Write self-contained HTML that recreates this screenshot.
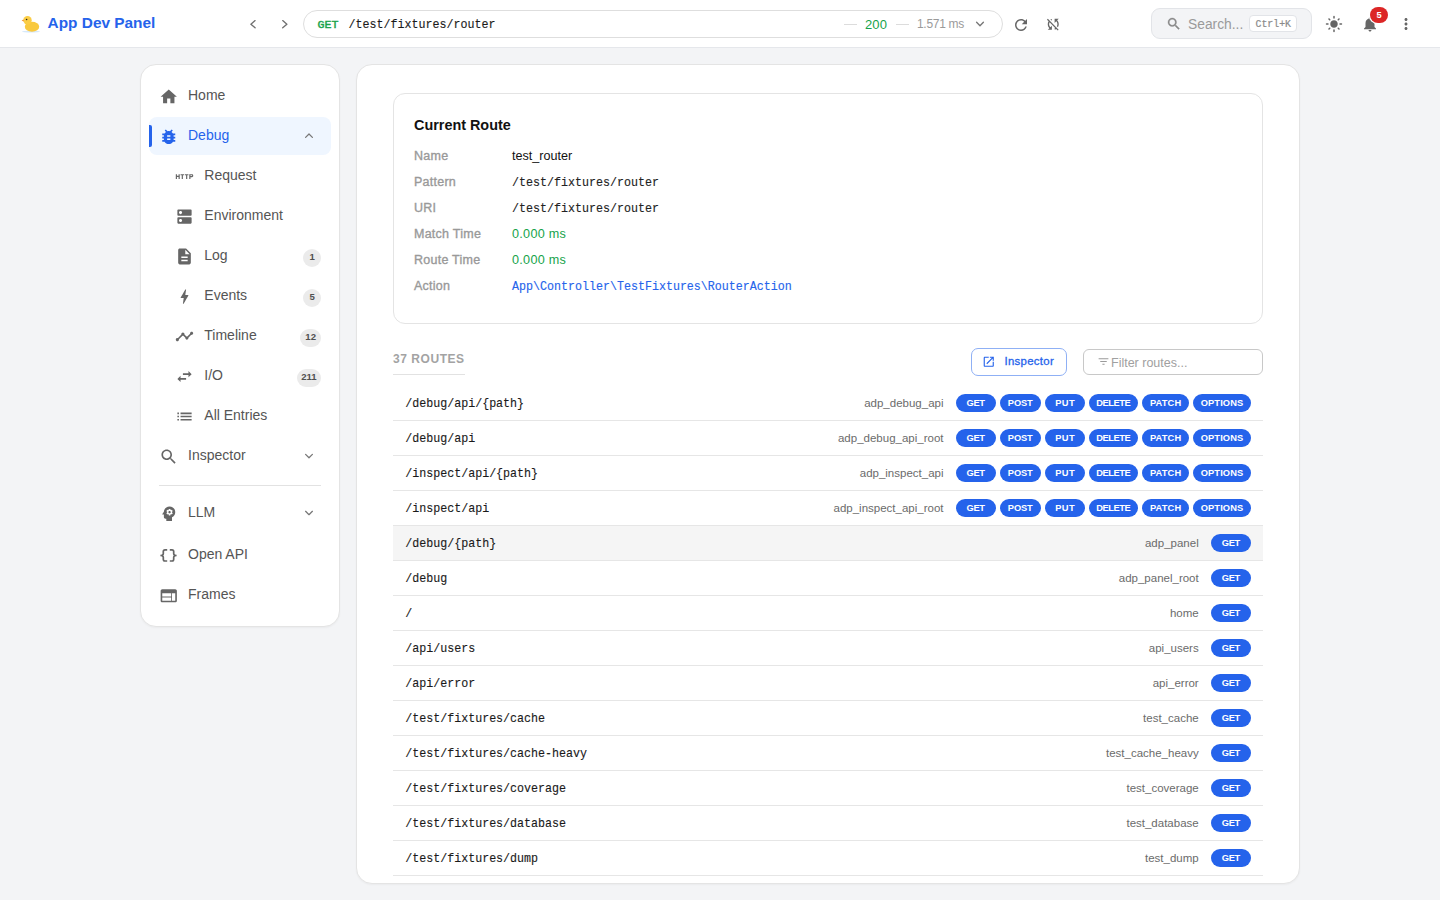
<!DOCTYPE html>
<html><head><meta charset="utf-8">
<style>
*{box-sizing:border-box;margin:0;padding:0}
html,body{width:1440px;height:900px;overflow:hidden}
body{background:#f3f4f6;font-family:"Liberation Sans",sans-serif;color:#1f2937;position:relative}
.a{position:absolute;white-space:nowrap}
.mono{font-family:"Liberation Mono",monospace}
svg.i{position:absolute;fill:#666}
#hdr{position:absolute;left:0;top:0;width:1440px;height:48px;background:#fff;border-bottom:1px solid #e5e7eb}
#side{position:absolute;left:140px;top:64px;width:200px;height:563px;background:#fff;border:1px solid #e4e4e4;border-radius:16px;box-shadow:0 1px 2px rgba(0,0,0,.04)}
#main{position:absolute;left:356px;top:64px;width:944px;height:820px;background:#fff;border:1px solid #e4e4e4;border-radius:16px;box-shadow:0 1px 2px rgba(0,0,0,.04)}
.bdg{position:absolute;height:18px;border-radius:9px;background:#ebebeb;color:#505050;font-size:9.6px;font-weight:bold;text-align:center;line-height:16.4px}
.mb{height:18px;border-radius:9px;background:#2563eb;color:#fff;font-size:9.3px;font-weight:bold;text-align:center;line-height:18.5px}
</style></head>
<body>
<div id="hdr">
<svg class="i" style="left:20px;top:14px" width="22" height="20" viewBox="0 0 22 20">
<ellipse cx="11" cy="17.6" rx="9" ry="1" fill="#d6e8fa"/>
<ellipse cx="12" cy="12.8" rx="7.2" ry="5" fill="#f9c93e"/>
<circle cx="7.5" cy="6.2" r="4.2" fill="#fbcd45"/>
<path d="M3.6 5.6 L1.6 6.6 L3.8 7.4Z" fill="#f08a24"/>
<circle cx="6.6" cy="5.5" r=".8" fill="#222"/></svg>
<div class="a" style="left:47.6px;top:14.22px;font-size:15.4px;line-height:18.48px;font-weight:bold;color:#2563eb">App Dev Panel</div>
<svg class="i" style="left:0;top:0;fill:none;stroke:#707070;stroke-width:1.35;stroke-linecap:round;stroke-linejoin:round" width="300" height="40"><path d="M255.1 20.6 L250.9 24.2 L255.1 27.8"/><path d="M282.7 20.6 L286.9 24.2 L282.7 27.8"/></svg>
<div class="a" style="left:303px;top:10px;width:700px;height:28px;border:1px solid #dedede;border-radius:14px"></div>
<div class="a mono" style="left:317.6px;top:17.89px;font-size:11.67px;line-height:14.0px;color:#16a34a;-webkit-text-stroke:.45px #16a34a">GET</div>
<div class="a mono" style="left:348.5px;top:17.89px;font-size:11.67px;line-height:14.0px;color:#1a1a1a;-webkit-text-stroke:.12px #1a1a1a;transform:scaleY(1.08);transform-origin:0 10.11px">/test/fixtures/router</div>
<div class="a" style="left:844px;top:24px;width:13px;height:1px;background:#dcdcdc"></div>
<div class="a" style="left:865px;top:16.50px;font-size:13px;line-height:15.6px;color:#16a34a;letter-spacing:.1px">200</div>
<div class="a" style="left:896px;top:24px;width:13px;height:1px;background:#dcdcdc"></div>
<div class="a" style="left:917px;top:17.44px;font-size:12px;line-height:14.4px;color:#9a9a9a;letter-spacing:-.3px">1.571 ms</div>
<svg class="i" style="left:960px;top:15px;fill:none;stroke:#777;stroke-width:1.35;stroke-linecap:round;stroke-linejoin:round" width="30" height="20"><path d="M16.6 7.3 L20 10.7 L23.4 7.3"/></svg>
<svg class="i" style="left:1012px;top:15.5px" width="18" height="18" viewBox="0 0 24 24"><path d="M17.65 6.35C16.2 4.9 14.21 4 12 4c-4.42 0-7.99 3.58-7.99 8s3.57 8 7.99 8c3.73 0 6.84-2.55 7.73-6h-2.08c-.82 2.33-3.04 4-5.650 4-3.31 0-6-2.69-6-6s2.69-6 6-6c1.66 0 3.14.69 4.22 1.78L13 11h7V4l-2.35 2.35z"/></svg>
<svg class="i" style="left:1045px;top:15.6px" width="16.5" height="16.5" viewBox="0 0 24 24"><path d="M10 6.35V4.26c-.8.21-1.55.54-2.23.96l1.46 1.46c.25-.12.5-.24.77-.33zm-7.14-.94 2.36 2.36C4.45 8.99 4 10.44 4 12c0 2.21.91 4.2 2.36 5.64L4 20h6v-6l-2.24 2.24C6.68 15.15 6 13.66 6 12c0-1 .25-1.94.68-2.77l8.08 8.08c-.25.13-.5.25-.77.34v2.09c.8-.21 1.55-.54 2.23-.96l2.36 2.36 1.27-1.27L4.14 4.14 2.86 5.41zM20 4h-6v6l2.24-2.24C17.32 8.85 18 10.34 18 12c0 1-.25 1.94-.68 2.77l1.46 1.46C19.550 15.01 20 13.56 20 12c0-2.21-.91-4.2-2.36-5.64L20 4z"/></svg>
<div class="a" style="left:1151px;top:8px;width:161px;height:31px;background:#f3f4f6;border:1px solid #e2e4e8;border-radius:9px"></div>
<svg class="i" style="left:1165.9px;top:16.4px;fill:#888" width="15.8" height="15.8" viewBox="0 0 24 24"><path stroke="#888" stroke-width=".5" d="M15.5 14h-.79l-.28-.27C15.41 12.59 16 11.11 16 9.5 16 5.91 13.09 3 9.5 3S3 5.91 3 9.5 5.91 16 9.5 16c1.61 0 3.09-.59 4.23-1.57l.27.28v.79l5 4.99L20.49 19l-4.99-5zm-6 0C7.01 14 5 11.99 5 9.5S7.01 5 9.5 5 14 7.01 14 9.5 11.99 14 9.5 14z"/></svg>
<div class="a" style="left:1188px;top:16.74px;font-size:13.8px;line-height:16.56px;color:#9a9a9a">Search...</div>
<div class="a" style="left:1249px;top:15px;width:47.5px;height:17px;background:#fff;border:1px solid #e2e4e8;border-radius:4px"></div>
<div class="a mono" style="left:1255.5px;top:18.86px;font-size:9.85px;line-height:11.82px;color:#8a8a8a;-webkit-text-stroke:.2px #8a8a8a;transform:scaleY(1.15);transform-origin:0 8.54px">Ctrl+K</div>
<svg class="i" style="left:1325px;top:15px" width="18" height="18" viewBox="0 0 24 24"><path d="M12 7c-2.76 0-5 2.24-5 5s2.24 5 5 5 5-2.24 5-5-2.24-5-5-5zM2 13h2c.55 0 1-.45 1-1s-.45-1-1-1H2c-.55 0-1 .45-1 1s.45 1 1 1zm18 0h2c.55 0 1-.45 1-1s-.45-1-1-1h-2c-.55 0-1 .45-1 1s.45 1 1 1zM11 2v2c0 .55.45 1 1 1s1-.45 1-1V2c0-.55-.45-1-1-1s-1 .45-1 1zm0 18v2c0 .55.45 1 1 1s1-.45 1-1v-2c0-.55-.45-1-1-1s-1 .45-1 1zM5.99 4.58c-.39-.39-1.03-.39-1.41 0-.39.39-.39 1.03 0 1.41l1.06 1.06c.39.39 1.03.39 1.41 0s.39-1.03 0-1.41L5.99 4.58zm12.37 12.37c-.39-.39-1.03-.39-1.41 0-.39.39-.39 1.03 0 1.41l1.06 1.06c.39.39 1.03.39 1.41 0 .39-.39.39-1.03 0-1.41l-1.06-1.06zm1.06-10.96c.39-.39.39-1.03 0-1.41-.39-.39-1.03-.39-1.41 0l-1.06 1.06c-.39.39-.39 1.03 0 1.41s1.03.39 1.41 0l1.06-1.06zM7.05 18.36c.39-.39.39-1.03 0-1.41-.39-.39-1.03-.39-1.41 0l-1.06 1.06c-.39.39-.39 1.03 0 1.41s1.03.39 1.41 0l1.06-1.06z"/></svg>
<svg class="i" style="left:1361px;top:14.8px" width="18" height="18" viewBox="0 0 24 24"><path d="M12 22c1.1 0 2-.9 2-2h-4c0 1.1.89 2 2 2zm6-6v-5c0-3.07-1.64-5.64-4.5-6.32V4c0-.83-.67-1.5-1.5-1.5s-1.5.67-1.5 1.5v.68C7.63 5.36 6 7.92 6 11v5l-2 2v1h16v-1l-2-2z"/></svg>
<div class="a" style="left:1370px;top:7px;width:18px;height:16px;border-radius:8px;background:#dc2626;color:#fff;font-size:9.3px;font-weight:bold;text-align:center;line-height:17px;box-shadow:0 0 0 1.3px #fff">5</div>
<svg class="i" style="left:1397px;top:14.8px" width="18" height="18" viewBox="0 0 24 24"><path d="M12 8c1.1 0 2-.9 2-2s-.9-2-2-2-2 .9-2 2 .9 2 2 2zm0 2c-1.1 0-2 .9-2 2s.9 2 2 2 2-.9 2-2-.9-2-2-2zm0 6c-1.1 0-2 .9-2 2s.9 2 2 2 2-.9 2-2-.9-2-2-2z"/></svg>
</div>
<div id="side"></div>
<div class="a" style="left:149px;top:116.5px;width:182px;height:38.5px;background:#eff6ff;border-radius:8px"></div>
<div class="a" style="left:149px;top:125px;width:3px;height:22px;background:#2563eb;border-radius:0 2px 2px 0"></div>
<svg class="i" style="left:159.2px;top:87.2px" width="19.5" height="19.5" viewBox="0 0 24 24"><path d="M10 20v-6h4v6h5v-8h3L12 3 2 12h3v8z"/></svg>
<div class="a" style="left:188px;top:87.25px;font-size:14px;line-height:16.8px;color:#555">Home</div>
<svg class="i" style="left:159.2px;top:127.2px;fill:#2563eb" width="19.5" height="19.5" viewBox="0 0 24 24"><path d="M20 8h-2.81c-.45-.78-1.07-1.45-1.82-1.96L17 4.41 15.59 3l-2.17 2.17C12.96 5.06 12.49 5 12 5s-.96.06-1.41.17L8.41 3 7 4.41l1.62 1.63C7.88 6.55 7.26 7.22 6.81 8H4v2h2.09c-.05.33-.09.66-.09 1v1H4v2h2v1c0 .34.04.67.09 1H4v2h2.81c1.04 1.79 2.97 3 5.19 3s4.15-1.21 5.19-3H20v-2h-2.09c.05-.33.09-.66.09-1v-1h2v-2h-2v-1c0-.34-.04-.67-.09-1H20V8zm-6 8h-4v-2h4v2zm0-4h-4v-2h4v2z"/></svg>
<div class="a" style="left:188px;top:127.25px;font-size:14px;line-height:16.8px;color:#2563eb">Debug</div>
<svg class="i" style="left:159.2px;top:447.2px" width="19.5" height="19.5" viewBox="0 0 24 24"><path d="M15.5 14h-.79l-.28-.27C15.41 12.59 16 11.11 16 9.5 16 5.91 13.09 3 9.5 3S3 5.91 3 9.5 5.91 16 9.5 16c1.61 0 3.09-.59 4.23-1.57l.27.28v.79l5 4.99L20.49 19l-4.99-5zm-6 0C7.01 14 5 11.99 5 9.5S7.01 5 9.5 5 14 7.01 14 9.5 11.99 14 9.5 14z"/></svg>
<div class="a" style="left:188px;top:447.25px;font-size:14px;line-height:16.8px;color:#555">Inspector</div>
<svg class="i" style="left:159.2px;top:503.99999999999994px" width="19.5" height="19.5" viewBox="0 0 24 24"><path d="M13 8.57c-.79 0-1.43.64-1.43 1.43s.64 1.43 1.43 1.43 1.43-.64 1.43-1.43-.64-1.43-1.43-1.43zM13 3C9.25 3 6.2 5.94 6.02 9.64L4.1 12.2c-.25.33-.01.8.4.8H6v3c0 1.1.9 2 2 2h1v3h7v-4.68c2.36-1.12 4-3.53 4-6.32 0-3.87-3.13-7-7-7zm3 7c0 .13-.01.26-.02.39l.83.66c.08.06.1.16.05.25l-.8 1.39c-.05.09-.16.12-.24.09l-.99-.4c-.21.16-.43.29-.67.39L14 13.83c-.01.1-.1.17-.2.17h-1.6c-.1 0-.18-.07-.2-.17l-.15-1.06c-.25-.1-.47-.23-.68-.39l-.99.4c-.09.03-.2 0-.25-.09l-.8-1.39c-.05-.08-.03-.19.05-.25l.84-.66c-.01-.13-.02-.26-.02-.39s.02-.27.04-.39l-.85-.66c-.08-.06-.1-.16-.05-.26l.8-1.38c.05-.09.15-.12.24-.09l1 .4c.2-.15.43-.29.67-.39L12 6.17c.02-.1.1-.17.2-.17h1.6c.1 0 .18.07.2.17l.15 1.06c.24.1.46.23.67.39l1-.4c.09-.03.2 0 .24.09l.8 1.38c.05.09.03.2-.05.26l-.85.66c.03.12.04.25.04.39z"/></svg>
<div class="a" style="left:188px;top:504.05px;font-size:14px;line-height:16.8px;color:#555">LLM</div>
<div class="a" style="left:188px;top:546.05px;font-size:14px;line-height:16.8px;color:#555">Open API</div>
<svg class="i" style="left:159.2px;top:586.0px" width="19.5" height="19.5" viewBox="0 0 24 24"><path d="M20 4H4c-1.1 0-1.99.9-1.99 2L2 18c0 1.1.9 2 2 2h16c1.1 0 2-.9 2-2V6c0-1.1-.9-2-2-2zm-5 14H4v-4h11v4zm0-5H4V9h11v4zm5 5h-4V9h4v9z"/></svg>
<div class="a" style="left:188px;top:586.05px;font-size:14px;line-height:16.8px;color:#555">Frames</div>
<svg class="i" style="left:0;top:0;fill:none;stroke:#666;stroke-width:1.7" width="200" height="600" viewBox="0 0 200 600"><path d="M167.2 549.9H165C163.9 549.9 163.3 550.5 163.3 551.6V553.8C163.3 554.9 162.6 555.5 160.4 555.5C162.6 555.5 163.3 556.1 163.3 557.2V559.3C163.3 560.4 163.9 561 165 561H167.2"/><path d="M169.8 549.9H172C173.1 549.9 173.7 550.5 173.7 551.6V553.8C173.7 554.9 174.4 555.5 176.6 555.5C174.4 555.5 173.7 556.1 173.7 557.2V559.3C173.7 560.4 173.1 561 172 561H169.8"/></svg>
<svg class="i" style="left:174.6px;top:167.0px" width="19" height="19" viewBox="0 0 24 24"><path d="M4.5 11h-2V9H1v6h1.5v-2.5h2V15H6V9H4.5v2zm2.5-.5h1.5V15H10v-4.5h1.5V9H7v1.5zm5.5 0H14V15h1.5v-4.5H17V9h-4.5v1.5zm9-1.5H18v6h1.5v-2h2c.8 0 1.5-.7 1.5-1.5v-1c0-.8-.7-1.5-1.5-1.5zm0 2.5h-2v-1h2v1z"/></svg>
<div class="a" style="left:204.3px;top:167.25px;font-size:14px;line-height:16.8px;color:#555">Request</div>
<svg class="i" style="left:174.6px;top:207.0px" width="19" height="19" viewBox="0 0 24 24"><path d="M20 13H4c-.55 0-1 .45-1 1v6c0 .55.45 1 1 1h16c.55 0 1-.45 1-1v-6c0-.55-.45-1-1-1zM7 19c-1.1 0-2-.9-2-2s.9-2 2-2 2 .9 2 2-.9 2-2 2zM20 3H4c-.55 0-1 .45-1 1v6c0 .55.45 1 1 1h16c.55 0 1-.45 1-1V4c0-.55-.45-1-1-1zM7 9c-1.1 0-2-.9-2-2s.9-2 2-2 2 .9 2 2-.9 2-2 2z"/></svg>
<div class="a" style="left:204.3px;top:207.25px;font-size:14px;line-height:16.8px;color:#555">Environment</div>
<svg class="i" style="left:174.6px;top:247.0px" width="19" height="19" viewBox="0 0 24 24"><path d="M14 2H6c-1.1 0-1.99.9-1.99 2L4 20c0 1.1.89 2 1.99 2H18c1.1 0 2-.9 2-2V8l-6-6zm2 16H8v-2h8v2zm0-4H8v-2h8v2zm-3-5V3.5L18.5 9H13z"/></svg>
<div class="a" style="left:204.3px;top:247.25px;font-size:14px;line-height:16.8px;color:#555">Log</div>
<div class="bdg" style="left:303.2px;top:249.0px;width:18px">1</div>
<svg class="i" style="left:174.6px;top:287.0px" width="19" height="19" viewBox="0 0 24 24"><path d="M11 21h-1l1-7H7.5c-.58 0-.57-.32-.38-.66.19-.34.05-.08.07-.12C8.48 10.94 10.42 7.54 13 3h1l-1 7h3.5c.49 0 .56.33.47.51l-.07.15C12.96 17.55 11 21 11 21z"/></svg>
<div class="a" style="left:204.3px;top:287.25px;font-size:14px;line-height:16.8px;color:#555">Events</div>
<div class="bdg" style="left:303.2px;top:289.0px;width:18px">5</div>
<svg class="i" style="left:174.6px;top:327.0px" width="19" height="19" viewBox="0 0 24 24"><path d="M23 8c0 1.1-.9 2-2 2-.18 0-.35-.02-.51-.07l-3.56 3.55c.05.16.07.34.07.52 0 1.1-.9 2-2 2s-2-.9-2-2c0-.18.02-.36.07-.52l-2.55-2.55c-.16.05-.34.07-.52.07s-.36-.02-.52-.07l-4.55 4.56c.05.16.07.33.07.51 0 1.1-.9 2-2 2s-2-.9-2-2 .9-2 2-2c.18 0 .35.02.51.07l4.56-4.55C8.02 9.36 8 9.18 8 9c0-1.1.9-2 2-2s2 .9 2 2c0 .18-.02.36-.07.52l2.55 2.55c.16-.05.34-.07.52-.07s.36.02.52.07l3.55-3.56C19.02 8.35 19 8.18 19 8c0-1.1.9-2 2-2s2 .9 2 2z"/></svg>
<div class="a" style="left:204.3px;top:327.25px;font-size:14px;line-height:16.8px;color:#555">Timeline</div>
<div class="bdg" style="left:300.2px;top:329.0px;width:21px">12</div>
<svg class="i" style="left:174.6px;top:367.0px" width="19" height="19" viewBox="0 0 24 24"><path d="M6.99 11 3 15l3.99 4v-3H14v-2H6.99v-3zM21 9l-3.99-4v3H10v2h7.01v3L21 9z"/></svg>
<div class="a" style="left:204.3px;top:367.25px;font-size:14px;line-height:16.8px;color:#555">I/O</div>
<div class="bdg" style="left:296.7px;top:369.0px;width:24.5px">211</div>
<svg class="i" style="left:174.6px;top:407.0px" width="19" height="19" viewBox="0 0 24 24"><path d="M3 13h2v-2H3v2zm0 4h2v-2H3v2zm0-8h2V7H3v2zm4 4h14v-2H7v2zm0 4h14v-2H7v2zM7 7v2h14V7H7z"/></svg>
<div class="a" style="left:204.3px;top:407.25px;font-size:14px;line-height:16.8px;color:#555">All Entries</div>
<svg class="i" style="left:0;top:0;fill:none;stroke:#777;stroke-width:1.25;stroke-linecap:round;stroke-linejoin:round" width="340" height="540"><path d="M305.6 137.4 L309 134 L312.4 137.4"/><path d="M305.6 454.4 L309 457.8 L312.4 454.4"/><path d="M305.6 511.3 L309 514.7 L312.4 511.3"/></svg>
<div class="a" style="left:159px;top:485px;width:162px;height:1px;background:#e2e2e2"></div>
<div id="main"></div>
<div class="a" style="left:393px;top:93px;width:870px;height:231px;border:1px solid #e4e4e4;border-radius:12px"></div>
<div class="a" style="left:414px;top:117.17px;font-size:14.4px;line-height:17.28px;font-weight:bold;color:#111">Current Route</div>
<div class="a" style="left:414px;top:148.97px;font-size:12.5px;line-height:15.0px;color:#999;letter-spacing:.25px;-webkit-text-stroke:.35px #999">Name</div>
<div class="a" style="left:512px;top:148.87px;font-size:12.6px;line-height:15.12px;color:#111">test_router</div>
<div class="a" style="left:414px;top:174.97px;font-size:12.5px;line-height:15.0px;color:#999;letter-spacing:.25px;-webkit-text-stroke:.35px #999">Pattern</div>
<div class="a mono" style="left:512px;top:175.89px;font-size:11.67px;line-height:14.0px;color:#222;-webkit-text-stroke:.12px #222;transform:scaleY(1.08);transform-origin:0 10.11px">/test/fixtures/router</div>
<div class="a" style="left:414px;top:200.97px;font-size:12.5px;line-height:15.0px;color:#999;letter-spacing:.25px;-webkit-text-stroke:.35px #999">URI</div>
<div class="a mono" style="left:512px;top:201.89px;font-size:11.67px;line-height:14.0px;color:#222;-webkit-text-stroke:.12px #222;transform:scaleY(1.08);transform-origin:0 10.11px">/test/fixtures/router</div>
<div class="a" style="left:414px;top:226.97px;font-size:12.5px;line-height:15.0px;color:#999;letter-spacing:.25px;-webkit-text-stroke:.35px #999">Match Time</div>
<div class="a" style="left:512px;top:226.87px;font-size:12.6px;line-height:15.12px;color:#16a34a;letter-spacing:.3px">0.000 ms</div>
<div class="a" style="left:414px;top:252.97px;font-size:12.5px;line-height:15.0px;color:#999;letter-spacing:.25px;-webkit-text-stroke:.35px #999">Route Time</div>
<div class="a" style="left:512px;top:252.87px;font-size:12.6px;line-height:15.12px;color:#16a34a;letter-spacing:.3px">0.000 ms</div>
<div class="a" style="left:414px;top:278.97px;font-size:12.5px;line-height:15.0px;color:#999;letter-spacing:.25px;-webkit-text-stroke:.35px #999">Action</div>
<div class="a mono" style="left:512px;top:279.89px;font-size:11.67px;line-height:14.0px;color:#2563eb;-webkit-text-stroke:.12px #2563eb;transform:scaleY(1.08);transform-origin:0 10.11px">App\Controller\TestFixtures\RouterAction</div>
<div class="a" style="left:393px;top:352.44px;font-size:12px;line-height:14.4px;font-weight:bold;color:#a3a3a3;letter-spacing:.55px">37 ROUTES</div>
<div class="a" style="left:393px;top:374px;width:72px;height:1px;background:#e2e2e2"></div>
<div class="a" style="left:971px;top:348px;width:96px;height:28px;border:1px solid #8fb0f5;border-radius:7px"></div>
<svg class="i" style="left:982.4px;top:355.4px;fill:#2563eb" width="13.5" height="13.5" viewBox="0 0 24 24"><path d="M19 19H5V5h7V3H5c-1.11 0-2 .9-2 2v14c0 1.1.89 2 2 2h14c1.1 0 2-.9 2-2v-7h-2v7zM14 3v2h3.59l-9.83 9.83 1.41 1.41L19 6.41V10h2V3h-7z"/></svg>
<div class="a" style="left:1004.5px;top:355.01px;font-size:11.4px;line-height:13.68px;color:#2563eb;letter-spacing:.3px;-webkit-text-stroke:.3px #2563eb">Inspector</div>
<div class="a" style="left:1083px;top:349px;width:180px;height:26px;border:1px solid #c8c8c8;border-radius:6px"></div>
<svg class="i" style="left:1097.4px;top:355px;fill:#9a9a9a" width="13" height="13" viewBox="0 0 24 24"><path d="M10 18h4v-2h-4v2zM3 6v2h18V6H3zm3 7h12v-2H6v2z"/></svg>
<div class="a" style="left:1111px;top:355.97px;font-size:12.5px;line-height:15.0px;color:#a0a0a0">Filter routes...</div>
<div class="a" style="left:393px;top:420px;width:870px;height:1px;background:#e6e6e6"></div>
<div class="a mono" style="left:405.2px;top:397.19px;font-size:11.67px;line-height:14.0px;color:#1a1a1a;-webkit-text-stroke:.12px #1a1a1a;transform:scaleY(1.08);transform-origin:0 10.11px">/debug/api/{path}</div>
<div class="a" style="right:496.5px;top:396.92px;font-size:11.5px;line-height:13.8px;color:#6b6b6b">adp_debug_api</div>
<div class="a mb" style="left:955.8px;top:394.2px;width:40px;letter-spacing:-0.37px;text-indent:-0.37px">GET</div>
<div class="a mb" style="left:1000px;top:394.2px;width:40.6px;letter-spacing:-0.15px;text-indent:-0.15px">POST</div>
<div class="a mb" style="left:1045.1px;top:394.2px;width:39.6px;letter-spacing:0.4px;text-indent:0.4px">PUT</div>
<div class="a mb" style="left:1089.2px;top:394.2px;width:48.6px;letter-spacing:-0.48px;text-indent:-0.48px">DELETE</div>
<div class="a mb" style="left:1142.2px;top:394.2px;width:46.7px;letter-spacing:0.15px;text-indent:0.15px">PATCH</div>
<div class="a mb" style="left:1193px;top:394.2px;width:57.9px;letter-spacing:0.1px;text-indent:0.1px">OPTIONS</div>
<div class="a" style="left:393px;top:455px;width:870px;height:1px;background:#e6e6e6"></div>
<div class="a mono" style="left:405.2px;top:432.19px;font-size:11.67px;line-height:14.0px;color:#1a1a1a;-webkit-text-stroke:.12px #1a1a1a;transform:scaleY(1.08);transform-origin:0 10.11px">/debug/api</div>
<div class="a" style="right:496.5px;top:431.92px;font-size:11.5px;line-height:13.8px;color:#6b6b6b">adp_debug_api_root</div>
<div class="a mb" style="left:955.8px;top:429.2px;width:40px;letter-spacing:-0.37px;text-indent:-0.37px">GET</div>
<div class="a mb" style="left:1000px;top:429.2px;width:40.6px;letter-spacing:-0.15px;text-indent:-0.15px">POST</div>
<div class="a mb" style="left:1045.1px;top:429.2px;width:39.6px;letter-spacing:0.4px;text-indent:0.4px">PUT</div>
<div class="a mb" style="left:1089.2px;top:429.2px;width:48.6px;letter-spacing:-0.48px;text-indent:-0.48px">DELETE</div>
<div class="a mb" style="left:1142.2px;top:429.2px;width:46.7px;letter-spacing:0.15px;text-indent:0.15px">PATCH</div>
<div class="a mb" style="left:1193px;top:429.2px;width:57.9px;letter-spacing:0.1px;text-indent:0.1px">OPTIONS</div>
<div class="a" style="left:393px;top:490px;width:870px;height:1px;background:#e6e6e6"></div>
<div class="a mono" style="left:405.2px;top:467.19px;font-size:11.67px;line-height:14.0px;color:#1a1a1a;-webkit-text-stroke:.12px #1a1a1a;transform:scaleY(1.08);transform-origin:0 10.11px">/inspect/api/{path}</div>
<div class="a" style="right:496.5px;top:466.92px;font-size:11.5px;line-height:13.8px;color:#6b6b6b">adp_inspect_api</div>
<div class="a mb" style="left:955.8px;top:464.2px;width:40px;letter-spacing:-0.37px;text-indent:-0.37px">GET</div>
<div class="a mb" style="left:1000px;top:464.2px;width:40.6px;letter-spacing:-0.15px;text-indent:-0.15px">POST</div>
<div class="a mb" style="left:1045.1px;top:464.2px;width:39.6px;letter-spacing:0.4px;text-indent:0.4px">PUT</div>
<div class="a mb" style="left:1089.2px;top:464.2px;width:48.6px;letter-spacing:-0.48px;text-indent:-0.48px">DELETE</div>
<div class="a mb" style="left:1142.2px;top:464.2px;width:46.7px;letter-spacing:0.15px;text-indent:0.15px">PATCH</div>
<div class="a mb" style="left:1193px;top:464.2px;width:57.9px;letter-spacing:0.1px;text-indent:0.1px">OPTIONS</div>
<div class="a" style="left:393px;top:525px;width:870px;height:1px;background:#e6e6e6"></div>
<div class="a mono" style="left:405.2px;top:502.19px;font-size:11.67px;line-height:14.0px;color:#1a1a1a;-webkit-text-stroke:.12px #1a1a1a;transform:scaleY(1.08);transform-origin:0 10.11px">/inspect/api</div>
<div class="a" style="right:496.5px;top:501.92px;font-size:11.5px;line-height:13.8px;color:#6b6b6b">adp_inspect_api_root</div>
<div class="a mb" style="left:955.8px;top:499.2px;width:40px;letter-spacing:-0.37px;text-indent:-0.37px">GET</div>
<div class="a mb" style="left:1000px;top:499.2px;width:40.6px;letter-spacing:-0.15px;text-indent:-0.15px">POST</div>
<div class="a mb" style="left:1045.1px;top:499.2px;width:39.6px;letter-spacing:0.4px;text-indent:0.4px">PUT</div>
<div class="a mb" style="left:1089.2px;top:499.2px;width:48.6px;letter-spacing:-0.48px;text-indent:-0.48px">DELETE</div>
<div class="a mb" style="left:1142.2px;top:499.2px;width:46.7px;letter-spacing:0.15px;text-indent:0.15px">PATCH</div>
<div class="a mb" style="left:1193px;top:499.2px;width:57.9px;letter-spacing:0.1px;text-indent:0.1px">OPTIONS</div>
<div class="a" style="left:393px;top:525.5px;width:870px;height:35px;background:#f5f5f5"></div>
<div class="a" style="left:393px;top:560px;width:870px;height:1px;background:#e6e6e6"></div>
<div class="a mono" style="left:405.2px;top:537.19px;font-size:11.67px;line-height:14.0px;color:#1a1a1a;-webkit-text-stroke:.12px #1a1a1a;transform:scaleY(1.08);transform-origin:0 10.11px">/debug/{path}</div>
<div class="a" style="right:241.29999999999995px;top:536.92px;font-size:11.5px;line-height:13.8px;color:#6b6b6b">adp_panel</div>
<div class="a mb" style="left:1211px;top:534.2px;width:40px;letter-spacing:-0.37px;text-indent:-0.37px">GET</div>
<div class="a" style="left:393px;top:595px;width:870px;height:1px;background:#e6e6e6"></div>
<div class="a mono" style="left:405.2px;top:572.19px;font-size:11.67px;line-height:14.0px;color:#1a1a1a;-webkit-text-stroke:.12px #1a1a1a;transform:scaleY(1.08);transform-origin:0 10.11px">/debug</div>
<div class="a" style="right:241.29999999999995px;top:571.92px;font-size:11.5px;line-height:13.8px;color:#6b6b6b">adp_panel_root</div>
<div class="a mb" style="left:1211px;top:569.2px;width:40px;letter-spacing:-0.37px;text-indent:-0.37px">GET</div>
<div class="a" style="left:393px;top:630px;width:870px;height:1px;background:#e6e6e6"></div>
<div class="a mono" style="left:405.2px;top:607.19px;font-size:11.67px;line-height:14.0px;color:#1a1a1a;-webkit-text-stroke:.12px #1a1a1a;transform:scaleY(1.08);transform-origin:0 10.11px">/</div>
<div class="a" style="right:241.29999999999995px;top:606.92px;font-size:11.5px;line-height:13.8px;color:#6b6b6b">home</div>
<div class="a mb" style="left:1211px;top:604.2px;width:40px;letter-spacing:-0.37px;text-indent:-0.37px">GET</div>
<div class="a" style="left:393px;top:665px;width:870px;height:1px;background:#e6e6e6"></div>
<div class="a mono" style="left:405.2px;top:642.19px;font-size:11.67px;line-height:14.0px;color:#1a1a1a;-webkit-text-stroke:.12px #1a1a1a;transform:scaleY(1.08);transform-origin:0 10.11px">/api/users</div>
<div class="a" style="right:241.29999999999995px;top:641.92px;font-size:11.5px;line-height:13.8px;color:#6b6b6b">api_users</div>
<div class="a mb" style="left:1211px;top:639.2px;width:40px;letter-spacing:-0.37px;text-indent:-0.37px">GET</div>
<div class="a" style="left:393px;top:700px;width:870px;height:1px;background:#e6e6e6"></div>
<div class="a mono" style="left:405.2px;top:677.19px;font-size:11.67px;line-height:14.0px;color:#1a1a1a;-webkit-text-stroke:.12px #1a1a1a;transform:scaleY(1.08);transform-origin:0 10.11px">/api/error</div>
<div class="a" style="right:241.29999999999995px;top:676.92px;font-size:11.5px;line-height:13.8px;color:#6b6b6b">api_error</div>
<div class="a mb" style="left:1211px;top:674.2px;width:40px;letter-spacing:-0.37px;text-indent:-0.37px">GET</div>
<div class="a" style="left:393px;top:735px;width:870px;height:1px;background:#e6e6e6"></div>
<div class="a mono" style="left:405.2px;top:712.19px;font-size:11.67px;line-height:14.0px;color:#1a1a1a;-webkit-text-stroke:.12px #1a1a1a;transform:scaleY(1.08);transform-origin:0 10.11px">/test/fixtures/cache</div>
<div class="a" style="right:241.29999999999995px;top:711.92px;font-size:11.5px;line-height:13.8px;color:#6b6b6b">test_cache</div>
<div class="a mb" style="left:1211px;top:709.2px;width:40px;letter-spacing:-0.37px;text-indent:-0.37px">GET</div>
<div class="a" style="left:393px;top:770px;width:870px;height:1px;background:#e6e6e6"></div>
<div class="a mono" style="left:405.2px;top:747.19px;font-size:11.67px;line-height:14.0px;color:#1a1a1a;-webkit-text-stroke:.12px #1a1a1a;transform:scaleY(1.08);transform-origin:0 10.11px">/test/fixtures/cache-heavy</div>
<div class="a" style="right:241.29999999999995px;top:746.92px;font-size:11.5px;line-height:13.8px;color:#6b6b6b">test_cache_heavy</div>
<div class="a mb" style="left:1211px;top:744.2px;width:40px;letter-spacing:-0.37px;text-indent:-0.37px">GET</div>
<div class="a" style="left:393px;top:805px;width:870px;height:1px;background:#e6e6e6"></div>
<div class="a mono" style="left:405.2px;top:782.19px;font-size:11.67px;line-height:14.0px;color:#1a1a1a;-webkit-text-stroke:.12px #1a1a1a;transform:scaleY(1.08);transform-origin:0 10.11px">/test/fixtures/coverage</div>
<div class="a" style="right:241.29999999999995px;top:781.92px;font-size:11.5px;line-height:13.8px;color:#6b6b6b">test_coverage</div>
<div class="a mb" style="left:1211px;top:779.2px;width:40px;letter-spacing:-0.37px;text-indent:-0.37px">GET</div>
<div class="a" style="left:393px;top:840px;width:870px;height:1px;background:#e6e6e6"></div>
<div class="a mono" style="left:405.2px;top:817.19px;font-size:11.67px;line-height:14.0px;color:#1a1a1a;-webkit-text-stroke:.12px #1a1a1a;transform:scaleY(1.08);transform-origin:0 10.11px">/test/fixtures/database</div>
<div class="a" style="right:241.29999999999995px;top:816.92px;font-size:11.5px;line-height:13.8px;color:#6b6b6b">test_database</div>
<div class="a mb" style="left:1211px;top:814.2px;width:40px;letter-spacing:-0.37px;text-indent:-0.37px">GET</div>
<div class="a" style="left:393px;top:875px;width:870px;height:1px;background:#e6e6e6"></div>
<div class="a mono" style="left:405.2px;top:852.19px;font-size:11.67px;line-height:14.0px;color:#1a1a1a;-webkit-text-stroke:.12px #1a1a1a;transform:scaleY(1.08);transform-origin:0 10.11px">/test/fixtures/dump</div>
<div class="a" style="right:241.29999999999995px;top:851.92px;font-size:11.5px;line-height:13.8px;color:#6b6b6b">test_dump</div>
<div class="a mb" style="left:1211px;top:849.2px;width:40px;letter-spacing:-0.37px;text-indent:-0.37px">GET</div>
</body></html>
